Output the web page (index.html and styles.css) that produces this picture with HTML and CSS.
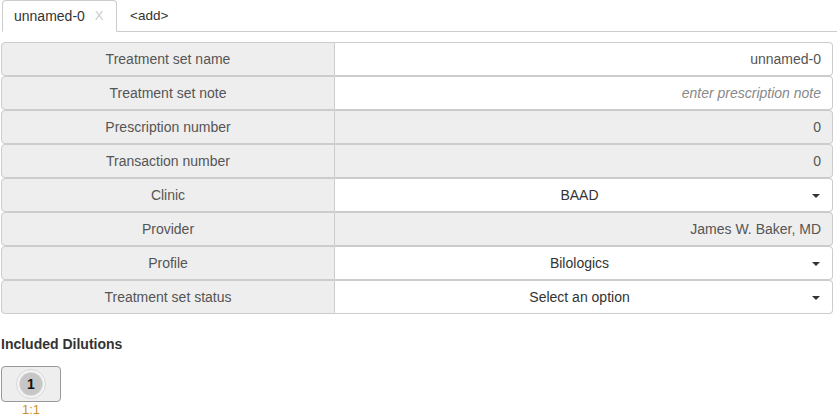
FILE: index.html
```html
<!DOCTYPE html>
<html>
<head>
<meta charset="utf-8">
<link rel="stylesheet" href="styles.css">
</head>
<body>
<div class="page">
  <div class="tabs">
    <div class="tab active"><span class="tab-label">unnamed-0</span><span class="tab-close">X</span></div>
    <div class="tab add">&lt;add&gt;</div>
    <div class="tab-fill"></div>
  </div>

  <div class="form">
    <div class="row">
      <div class="label">Treatment set name</div>
      <div class="value right">unnamed-0</div>
    </div>
    <div class="row">
      <div class="label">Treatment set note</div>
      <div class="value right placeholder">enter prescription note</div>
    </div>
    <div class="row">
      <div class="label">Prescription number</div>
      <div class="value right readonly">0</div>
    </div>
    <div class="row">
      <div class="label">Transaction number</div>
      <div class="value right readonly">0</div>
    </div>
    <div class="row">
      <div class="label">Clinic</div>
      <div class="value select"><span class="sel-text">BAAD</span><span class="caret"></span></div>
    </div>
    <div class="row">
      <div class="label">Provider</div>
      <div class="value right readonly">James W. Baker, MD</div>
    </div>
    <div class="row">
      <div class="label">Profile</div>
      <div class="value select"><span class="sel-text">Bilologics</span><span class="caret"></span></div>
    </div>
    <div class="row">
      <div class="label">Treatment set status</div>
      <div class="value select"><span class="sel-text">Select an option</span><span class="caret"></span></div>
    </div>
  </div>

  <h4 class="section-title">Included Dilutions</h4>
  <div class="dilutions">
    <div class="dilution">
      <div class="dil-btn"><span class="ring"><span class="dot">1</span></span></div>
      <div class="dil-ratio">1:1</div>
    </div>
  </div>
</div>
</body>
</html>
```

FILE: styles.css
```css
html, body {
  margin: 0;
  padding: 0;
  background: #fff;
}
body {
  font-family: "Liberation Sans", Arial, sans-serif;
  font-size: 14px;
  color: #333;
}
.page {
  width: 837px;
  height: 418px;
  overflow: hidden;
}
.tabs {
  display: flex;
  height: 32px;
  padding-left: 2px;
  box-sizing: border-box;
}
.tab {
  box-sizing: border-box;
  height: 32px;
  display: flex;
  align-items: center;
  line-height: 20px;
  border-bottom: 1px solid #ccc;
}
.tab.active {
  width: 115px;
  padding-left: 11px;
  border: 1px solid #ccc;
  border-bottom-color: transparent;
  border-radius: 4px 4px 0 0;
  color: #333;
}
.tab-close {
  color: #ccc;
  font-size: 13px;
  margin-left: 10px;
}
.tab.add {
  padding-left: 13px;
  padding-right: 8px;
  color: #333;
  font-size: 13.5px;
}
.tab-fill {
  flex: 1;
  border-bottom: 1px solid #ccc;
}
.form {
  margin: 10px 4px 0 1px;
}
.row {
  display: flex;
  height: 34px;
}
.label {
  box-sizing: border-box;
  width: 334px;
  border: 1px solid #ccc;
  border-radius: 4px 0 0 4px;
  background: #eee;
  color: #555;
  display: flex;
  align-items: center;
  justify-content: center;
  padding-bottom: 1px;
}
.value {
  box-sizing: border-box;
  flex: 1;
  border: 1px solid #ccc;
  border-left: 0;
  border-radius: 0 4px 4px 0;
  background: #fff;
  color: #555;
  display: flex;
  align-items: center;
  padding: 0 11px 1px 12px;
}
.value.right {
  justify-content: flex-end;
}
.value.readonly {
  background: #eee;
}
.value.placeholder {
  color: #888;
  font-style: italic;
}
.value.select {
  position: relative;
  justify-content: center;
  color: #333;
  padding-right: 20px;
}
.caret {
  position: absolute;
  right: 12px;
  top: 15px;
  width: 0;
  height: 0;
  border-left: 4px solid transparent;
  border-right: 4px solid transparent;
  border-top: 4px solid #333;
}
.section-title {
  margin: 22px 0 0 1px;
  font-size: 14px;
  font-weight: bold;
  color: #333;
  line-height: 17px;
}
.dilutions {
  display: flex;
  margin: 13px 0 0 1px;
}
.dilution {
  display: flex;
  flex-direction: column;
  align-items: center;
  width: 60px;
}
.dil-btn {
  box-sizing: border-box;
  width: 60px;
  height: 36px;
  border: 1px solid #999;
  border-radius: 4px;
  background: #eee;
  display: flex;
  align-items: center;
  justify-content: center;
}
.ring {
  box-sizing: border-box;
  width: 30px;
  height: 30px;
  border-radius: 50%;
  border: 1px solid #d6d6d6;
  background: #f7f7f7;
  display: flex;
  align-items: center;
  justify-content: center;
}
.dot {
  width: 22px;
  height: 22px;
  border-radius: 50%;
  background: #c6c6c6;
  box-shadow: 0 0 1px 1px #d8d8d8;
  display: flex;
  align-items: center;
  justify-content: center;
  font-weight: bold;
  font-size: 14px;
  color: #111;
}
.dil-ratio {
  font-size: 13px;
  color: #cc9128;
  line-height: 15px;
  margin-top: 0;
}
```
